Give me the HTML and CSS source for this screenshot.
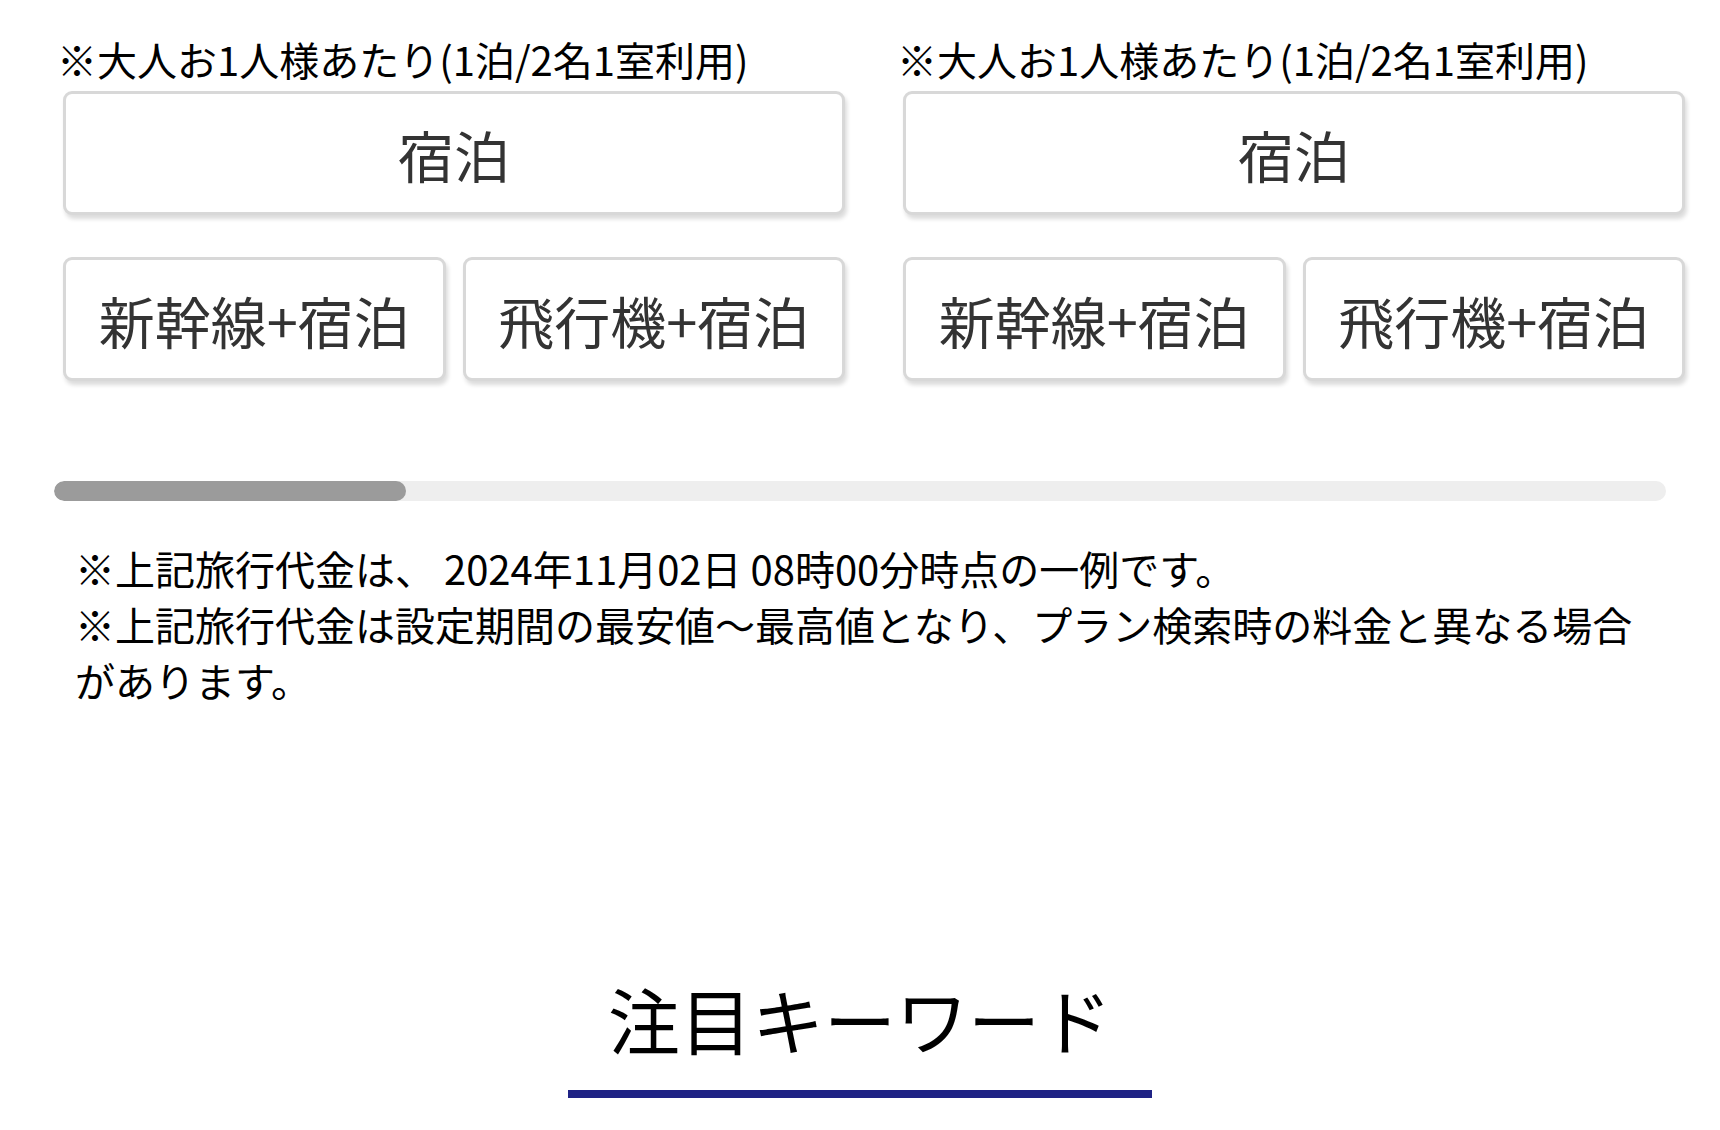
FILE: index.html
```html
<!DOCTYPE html>
<html lang="ja">
<head>
<meta charset="utf-8">
<title>プラン</title>
<link rel="stylesheet" href="styles.css">
</head>
<body>
<main class="page">
  <section class="plans-section">
    <div class="plans">
      <div class="plan">
        <p class="plan-note">※大人お1人様あたり(1泊/2名1室利用)</p>
        <div class="plan-buttons">
          <a class="plan-btn plan-btn-wide" href="#">宿泊</a>
          <a class="plan-btn" href="#">新幹線+宿泊</a>
          <a class="plan-btn" href="#">飛行機+宿泊</a>
        </div>
      </div>
      <div class="plan">
        <p class="plan-note">※大人お1人様あたり(1泊/2名1室利用)</p>
        <div class="plan-buttons">
          <a class="plan-btn plan-btn-wide" href="#">宿泊</a>
          <a class="plan-btn" href="#">新幹線+宿泊</a>
          <a class="plan-btn" href="#">飛行機+宿泊</a>
        </div>
      </div>
    </div>
    <div class="scroll-track"><div class="scroll-thumb"></div></div>
    <div class="notes">
      <p>※上記旅行代金は、 2024年11月02日 08時00分時点の一例です。</p>
      <p>※上記旅行代金は設定期間の最安値～最高値となり、プラン検索時の料金と異なる場合があります。</p>
    </div>
  </section>
  <section class="keyword-section">
    <h2 class="section-title">注目キーワード</h2>
  </section>
</main>
</body>
</html>
```

FILE: styles.css
```css
* {
  box-sizing: border-box;
}

html, body {
  margin: 0;
  padding: 0;
  background: #fff;
}

body {
  font-family: "Noto Sans CJK JP", "Noto Sans", sans-serif;
  color: #000;
  width: 1720px;
  height: 1130px;
  overflow: hidden;
}

.plans-section {
  padding-top: 20px;
}

.plans {
  display: flex;
  gap: 44px;
  padding: 15px 0 12px 57px;
  overflow: hidden;
}

.plan {
  flex: 0 0 796px;
}

.plan-note {
  margin: 0;
  font-size: 40px;
  line-height: 48px;
  white-space: nowrap;
  color: #000;
}

.plan-buttons {
  margin-top: 8px;
  padding: 0 8px 0 6px;
  display: grid;
  grid-template-columns: 1fr 1fr;
  column-gap: 17px;
  row-gap: 42px;
}

.plan-btn {
  height: 124px;
  display: flex;
  align-items: center;
  justify-content: center;
  border: 3px solid #d8d8d8;
  border-radius: 9px;
  background: #fff;
  box-shadow: 2px 4px 4px rgba(0, 0, 0, 0.14);
  color: #333;
  font-size: 56px;
  text-decoration: none;
  white-space: nowrap;
}

.plan-btn-wide {
  grid-column: 1 / 3;
}

.scroll-track {
  margin: 88px 54px 0 54px;
  height: 20px;
  border-radius: 10px;
  background: #eeeeee;
  overflow: hidden;
}

.scroll-thumb {
  width: 352px;
  height: 100%;
  border-radius: 10px;
  background: #9b9b9b;
}

.notes {
  margin: 39px 54px 0 54px;
  padding: 0 21px;
  font-size: 40px;
  line-height: 56px;
  color: #000;
}

.notes p {
  margin: 0;
}

.keyword-section {
  padding-top: 260px;
  display: flex;
  justify-content: center;
}

.section-title {
  margin: 0;
  width: 584px;
  text-align: center;
  font-size: 72px;
  font-weight: 400;
  line-height: 100px;
  padding-bottom: 22px;
  border-bottom: 8px solid #1f2385;
}
```
